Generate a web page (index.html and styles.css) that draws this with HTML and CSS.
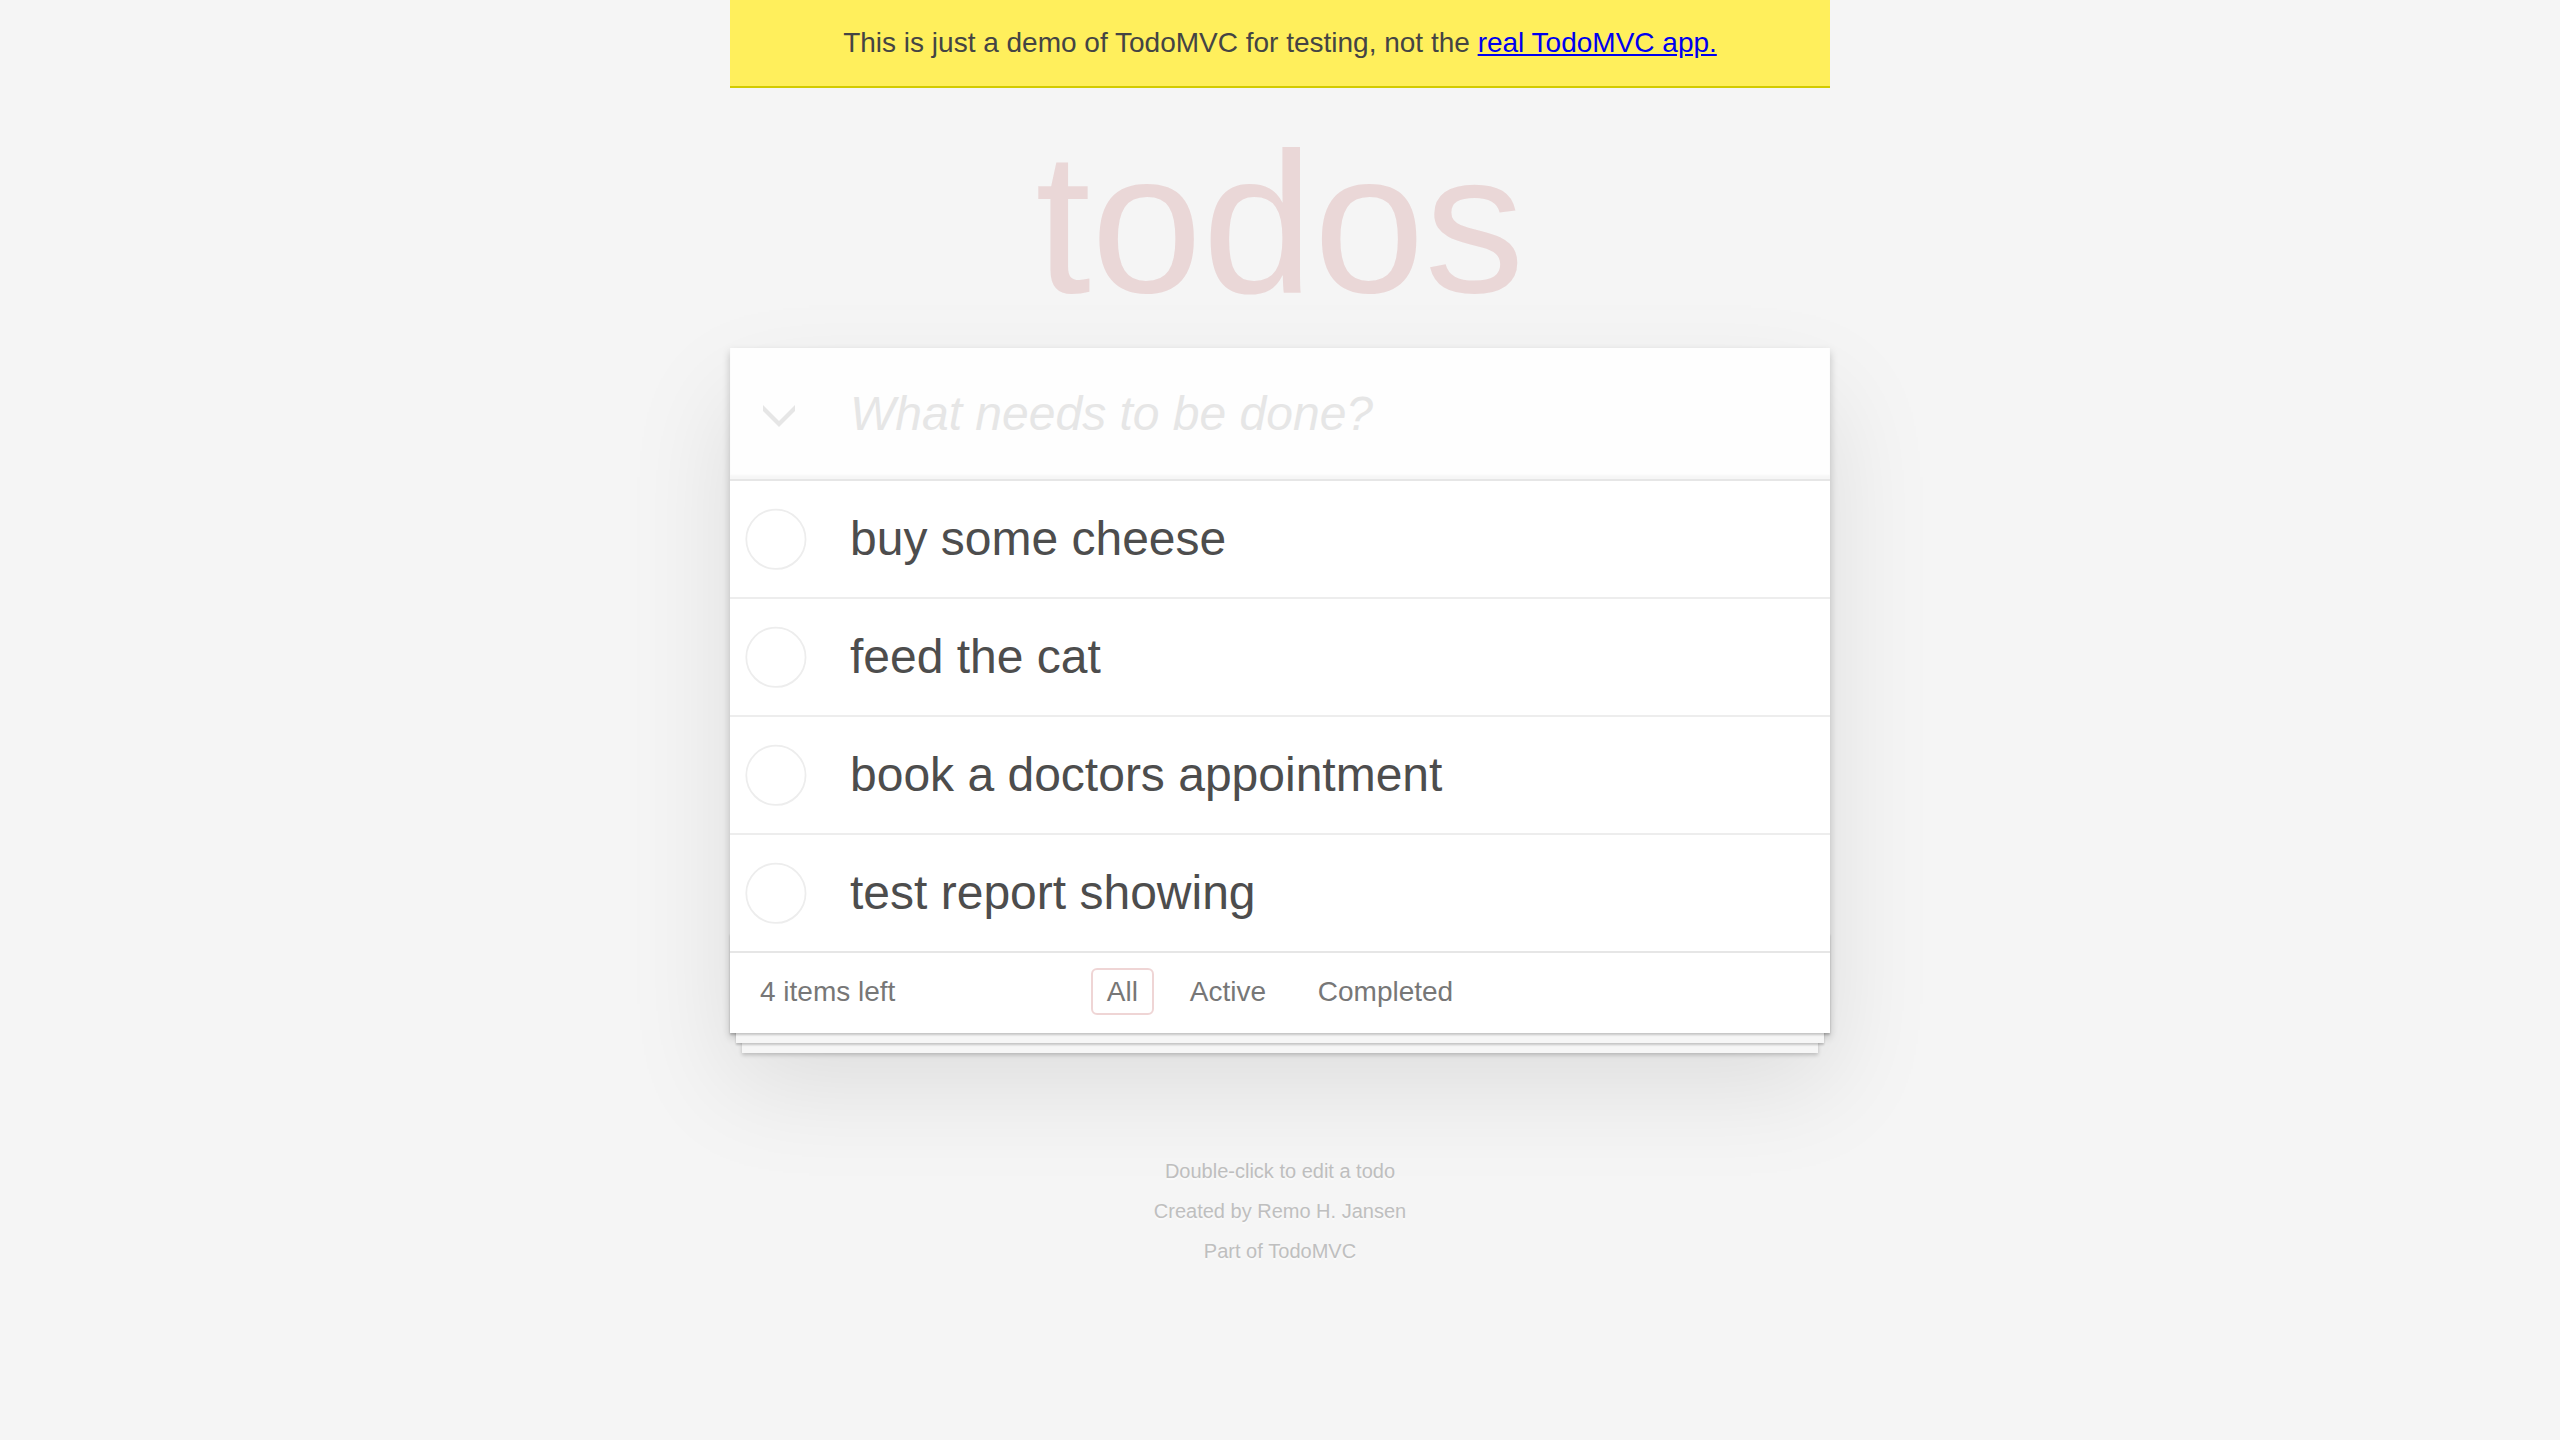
FILE: index.html
```html
<!DOCTYPE html>
<html lang="en">
<head>
<meta charset="utf-8">
<title>React • TodoMVC</title>
<link rel="stylesheet" href="styles.css">
</head>
<body>
<div class="page">
  <div class="banner">This is just a demo of TodoMVC for testing, not the <a class="banner-link" href="#">real TodoMVC app.</a></div>
  <h1 class="title">todos</h1>
  <section class="todoapp">
    <header class="header">
      <input class="new-todo" placeholder="What needs to be done?">
      <svg class="toggle-all-icon" width="32" height="22" viewBox="0 0 32 22" aria-hidden="true"><polygon points="0,0 16,16 32,0 32,6 16,22 0,6" fill="#e6e6e6"/></svg>
    </header>
    <section class="main">
      <ul class="todo-list">
        <li class="todo">
          <span class="toggle"><svg width="80" height="80" viewBox="-10 -18 100 135"><circle cx="50" cy="50" r="50" fill="none" stroke="#ededed" stroke-width="3"/></svg></span>
          <label class="todo-text">buy some cheese</label>
        </li>
        <li class="todo">
          <span class="toggle"><svg width="80" height="80" viewBox="-10 -18 100 135"><circle cx="50" cy="50" r="50" fill="none" stroke="#ededed" stroke-width="3"/></svg></span>
          <label class="todo-text">feed the cat</label>
        </li>
        <li class="todo">
          <span class="toggle"><svg width="80" height="80" viewBox="-10 -18 100 135"><circle cx="50" cy="50" r="50" fill="none" stroke="#ededed" stroke-width="3"/></svg></span>
          <label class="todo-text">book a doctors appointment</label>
        </li>
        <li class="todo">
          <span class="toggle"><svg width="80" height="80" viewBox="-10 -18 100 135"><circle cx="50" cy="50" r="50" fill="none" stroke="#ededed" stroke-width="3"/></svg></span>
          <label class="todo-text">test report showing</label>
        </li>
      </ul>
    </section>
    <footer class="footer">
      <span class="todo-count"><strong>4</strong> items left</span>
      <ul class="filters">
        <li class="filter"><a class="filter-link selected" href="#/">All</a></li>
        <li class="filter"><a class="filter-link" href="#/active">Active</a></li>
        <li class="filter"><a class="filter-link" href="#/completed">Completed</a></li>
      </ul>
      <span class="footer-spacer"></span>
    </footer>
  </section>
  <footer class="info">
    <p class="info-line">Double-click to edit a todo</p>
    <p class="info-line">Created by <a class="info-link" href="#">Remo H. Jansen</a></p>
    <p class="info-line">Part of <a class="info-link" href="#">TodoMVC</a></p>
  </footer>
</div>
</body>
</html>
```
FILE: styles.css
```css
html, body {
  margin: 0;
  padding: 0;
}

body {
  background: #f5f5f5;
  color: #4d4d4d;
  font: 28px/1.4em "Liberation Sans", Arial, Helvetica, sans-serif;
  font-weight: 300;
}

.page {
  max-width: 1100px;
  margin: 0 auto;
}

.banner {
  background: #ffef5c;
  border-bottom: 2px solid #d2cb00;
  padding: 23px 0 24px;
  line-height: 39px;
  text-align: center;
  color: #444;
}

.banner-link {
  color: #0000ee;
  text-decoration: underline;
}

.title {
  margin: 35px 0 25px;
  font-size: 200px;
  line-height: 200px;
  font-weight: 100;
  text-align: center;
  color: rgba(175, 47, 47, 0.15);
  text-rendering: optimizeLegibility;
}

.todoapp {
  position: relative;
  background: #fff;
  box-shadow: 0 4px 8px 0 rgba(0, 0, 0, 0.2), 0 50px 100px 0 rgba(0, 0, 0, 0.1);
}

.todoapp::after {
  content: '';
  position: absolute;
  right: 0;
  bottom: 0;
  left: 0;
  height: 100px;
  overflow: hidden;
  box-shadow: 0 2px 2px rgba(0, 0, 0, 0.2),
              0 16px 0 -6px #f6f6f6,
              0 18px 2px -6px rgba(0, 0, 0, 0.2),
              0 32px 0 -12px #f6f6f6,
              0 34px 4px -12px rgba(0, 0, 0, 0.2);
}

.header {
  position: relative;
  margin: 0;
}

.toggle-all-icon {
  position: absolute;
  top: 57px;
  left: 33px;
  display: block;
}

.new-todo {
  display: block;
  margin: 0;
  width: 100%;
  box-sizing: border-box;
  padding: 32px 32px 32px 120px;
  border: none;
  outline: none;
  background: rgba(0, 0, 0, 0.003);
  box-shadow: inset 0 -4px 2px rgba(0, 0, 0, 0.03);
  font-family: inherit;
  font-size: 48px;
  font-weight: inherit;
  line-height: 67.2px;
  color: inherit;
}

.new-todo::placeholder {
  font-style: italic;
  font-weight: 300;
  color: #e6e6e6;
}

.main {
  position: relative;
  z-index: 2;
  border-top: 2px solid #e6e6e6;
}

.todo-list {
  margin: 0;
  padding: 0;
  list-style: none;
}

.todo {
  display: flex;
  align-items: center;
  font-size: 48px;
  border-bottom: 2px solid #ededed;
}

.todo:last-child {
  border-bottom: none;
}

.toggle {
  flex: none;
  display: block;
  width: 80px;
  height: 80px;
}

.toggle svg {
  display: block;
}

.todo-text {
  flex: 1;
  display: block;
  padding: 30px 30px 30px 40px;
  line-height: 56px;
  color: #4d4d4d;
  word-break: break-all;
}

.footer {
  display: grid;
  grid-template-columns: 1fr auto 1fr;
  align-items: start;
  color: #777;
  padding: 19px 30px 21px;
  height: 40px;
  border-top: 2px solid #e6e6e6;
}

.todo-count {
  text-align: left;
}

.todo-count strong {
  font-weight: 300;
}

.filters {
  margin: 0;
  padding: 0;
  list-style: none;
  white-space: nowrap;
}

.filter {
  display: inline;
}

.filter-link {
  color: inherit;
  margin: 6px;
  padding: 6px 14px;
  text-decoration: none;
  border: 2px solid transparent;
  border-radius: 6px;
}

.filter-link.selected {
  border-color: rgba(175, 47, 47, 0.2);
}

.info {
  margin: 128px auto 0;
  color: #bfbfbf;
  font-size: 20px;
  text-shadow: 0 2px 0 rgba(255, 255, 255, 0.5);
  text-align: center;
}

.info-line {
  line-height: 1;
  margin: 20px 0;
}

.info-line:first-child {
  margin-top: 0;
}

.info-link {
  color: inherit;
  text-decoration: none;
  font-weight: 400;
}
```
